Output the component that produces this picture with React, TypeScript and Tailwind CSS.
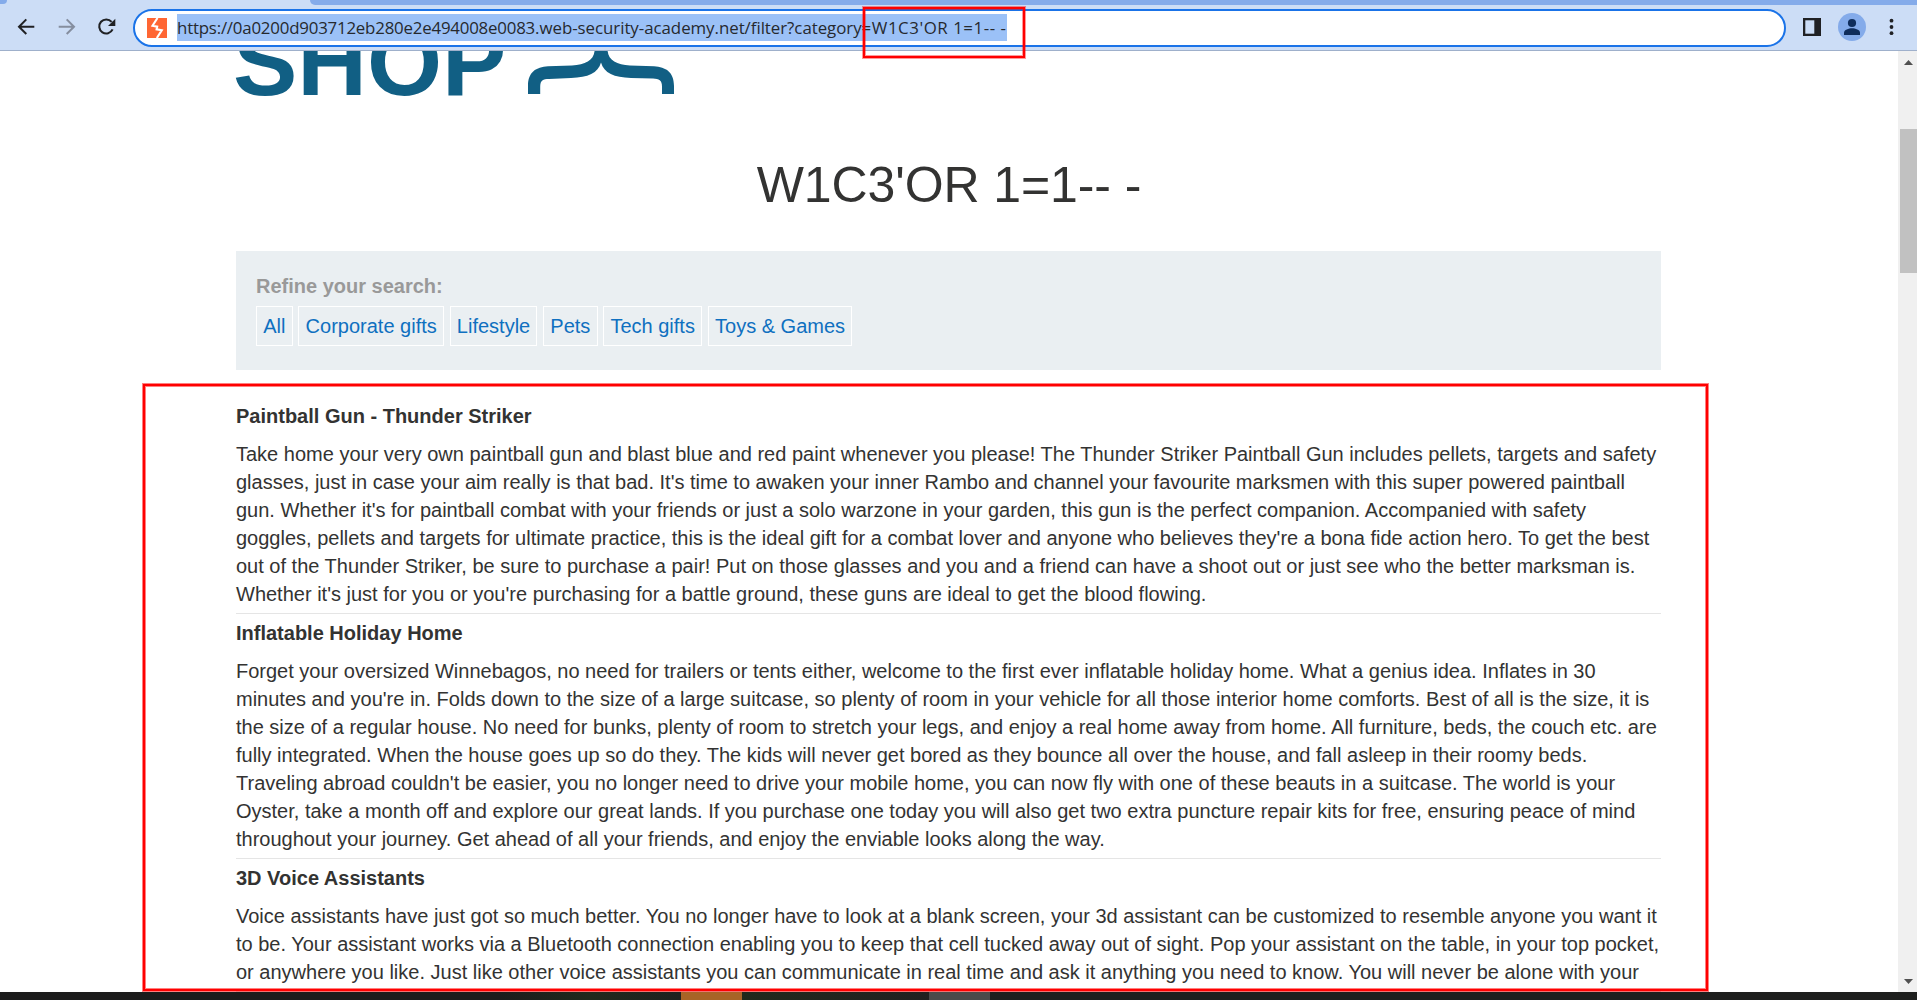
import React from "react";

const categories = ["All", "Corporate gifts", "Lifestyle", "Pets", "Tech gifts", "Toys & Games"];

const products = [
  {
    name: "Paintball Gun - Thunder Striker",
    lines: [
      "Take home your very own paintball gun and blast blue and red paint whenever you please! The Thunder Striker Paintball Gun includes pellets, targets and safety",
      "glasses, just in case your aim really is that bad. It's time to awaken your inner Rambo and channel your favourite marksmen with this super powered paintball",
      "gun. Whether it's for paintball combat with your friends or just a solo warzone in your garden, this gun is the perfect companion. Accompanied with safety",
      "goggles, pellets and targets for ultimate practice, this is the ideal gift for a combat lover and anyone who believes they're a bona fide action hero. To get the best",
      "out of the Thunder Striker, be sure to purchase a pair! Put on those glasses and you and a friend can have a shoot out or just see who the better marksman is.",
      "Whether it's just for you or you're purchasing for a battle ground, these guns are ideal to get the blood flowing.",
    ],
  },
  {
    name: "Inflatable Holiday Home",
    lines: [
      "Forget your oversized Winnebagos, no need for trailers or tents either, welcome to the first ever inflatable holiday home. What a genius idea. Inflates in 30",
      "minutes and you're in. Folds down to the size of a large suitcase, so plenty of room in your vehicle for all those interior home comforts. Best of all is the size, it is",
      "the size of a regular house. No need for bunks, plenty of room to stretch your legs, and enjoy a real home away from home. All furniture, beds, the couch etc. are",
      "fully integrated. When the house goes up so do they. The kids will never get bored as they bounce all over the house, and fall asleep in their roomy beds.",
      "Traveling abroad couldn't be easier, you no longer need to drive your mobile home, you can now fly with one of these beauts in a suitcase. The world is your",
      "Oyster, take a month off and explore our great lands. If you purchase one today you will also get two extra puncture repair kits for free, ensuring peace of mind",
      "throughout your journey. Get ahead of all your friends, and enjoy the enviable looks along the way.",
    ],
  },
  {
    name: "3D Voice Assistants",
    lines: [
      "Voice assistants have just got so much better. You no longer have to look at a blank screen, your 3d assistant can be customized to resemble anyone you want it",
      "to be. Your assistant works via a Bluetooth connection enabling you to keep that cell tucked away out of sight. Pop your assistant on the table, in your top pocket,",
      "or anywhere you like. Just like other voice assistants you can communicate in real time and ask it anything you need to know. You will never be alone with your",
    ],
  },
];

function BrowserBar() {
  return (
    <header className="flex h-[51px] shrink-0 flex-col border-b border-[#9fb0cb] bg-[#ccddf6]">
      <div className="flex h-[5px] shrink-0 justify-between">
        <div className="h-[4px] w-[7px] rounded-br-[7px] bg-[#84abea]" />
        <div className="h-[5px] w-[1607px] rounded-bl-[8px] bg-[#84abea]" />
      </div>
      <div className="flex h-[45px] items-start pt-[4px]">
        <svg className="mt-[9px] ml-[17px] h-[18px] w-[18px]" viewBox="0 0 18 18" fill="none" stroke="#202124" strokeWidth="2">
          <path d="M17.3 8.7H2.2M9.3 1.4 2 8.7 9.3 16" />
        </svg>
        <svg className="mt-[9px] ml-[23px] h-[18px] w-[18px]" viewBox="0 0 18 18" fill="none" stroke="#858e9f" strokeWidth="2">
          <path d="M.7 8.7h15.1M8.7 1.4 16 8.7 8.7 16" />
        </svg>
        <svg className="mt-[9px] ml-[21px] h-[18px] w-[20px]" viewBox="0 0 20 18" fill="none">
          <path d="M14.6 3.9A7 7 0 1 0 15.6 11.4" stroke="#202124" strokeWidth="2.1" />
          <path d="M18.3.8V8H11z" fill="#202124" />
        </svg>
        <div className="ml-[16px] flex h-[38px] w-[1652.5px] items-start rounded-full border-[2px] border-[#1a73e8] bg-white">
          <svg className="mt-[7px] ml-[12px] h-5 w-5 shrink-0" viewBox="0 0 20 20">
            <path d="M0 0H20V20H0z" fill="#ff6633" />
            <path d="M10.500 0 5.500 7.800 10.200 8.600 9.600 11.300 14.800 12.300 9.800 20" fill="none" stroke="#fff" strokeWidth="2.1" />
          </svg>
          <div className="mt-[3px] ml-[10px] h-[27px] w-[830px] bg-[#9bc1f7] font-['Open_Sans','Noto_Sans',sans-serif] text-[16.85px] leading-[27px] whitespace-nowrap text-[#26292e]">
            <span className="tracking-[-0.2px]">https://0a0200d903712eb280e2e494008e0083</span>
            <span className="tracking-[-0.03px]">.web-security-academy.net/filter?category</span>
            <span className="tracking-[0.55px]">=W1C3'OR 1=1-- -</span>
          </div>
        </div>
        <svg className="mt-[9px] ml-[17px] h-[18px] w-[18px]" viewBox="0 0 18 18">
          <path d="M0 0h18v18H0z" fill="#202124" />
          <path d="M2.3 2.3h9v13.4h-9z" fill="#ccddf6" />
        </svg>
        <svg className="mt-[4px] ml-[17.5px] h-7 w-7" viewBox="0 0 28 28">
          <circle cx="14" cy="14" r="14" fill="#84abea" />
          <circle cx="14" cy="10" r="4.1" fill="#0f2d5c" />
          <path d="M6 22v-2.3c0-3 4.6-4.5 8-4.5s8 1.5 8 4.5V22z" fill="#0f2d5c" />
        </svg>
        <svg className="mt-[9px] ml-[23px] h-[18px] w-[5px]" viewBox="0 0 5 18" fill="#202124">
          <circle cx="2.5" cy="2.7" r="1.9" />
          <circle cx="2.5" cy="9" r="1.9" />
          <circle cx="2.5" cy="15.2" r="1.9" />
        </svg>
      </div>
    </header>
  );
}

function Logo() {
  return (
    <div className="-ml-[3px] flex h-[50px] items-start overflow-hidden">
      <div className="-mt-[38.5px] w-[295px] text-[96.5px] leading-[97px] font-bold text-[#115f84]">SHOP</div>
      <svg className="h-[43px] w-[147px] shrink-0" viewBox="0 0 147 43" fill="#115f84">
        <path d="M0 43V35C0 21 8 16 20 15.200L44 14.500C58 13.500 66.700 9 66.700-2H79.500C79.500 9 88 13.500 102 14.500L126 15.200C138 16 146 21 146 35V43H134V36C134 29 131 27.800 125 27.600L103 27C86 26.500 76 22 73 11.500C70 22 60 26.500 43 27L21 28C15 28.200 12.200 29 12.200 36V43z" />
      </svg>
    </div>
  );
}

function Scrollbar() {
  return (
    <div className="flex w-[19px] shrink-0 flex-col items-end bg-[#f0f0f0]">
      <div className="flex h-[78px] w-[17px] justify-center pt-[9px]">
        <svg className="h-[5px] w-[9px]" viewBox="0 0 9 5" fill="#505050"><path d="M4.5 0 9 5H0z" /></svg>
      </div>
      <div className="h-[144px] w-[17px] bg-[#c1c1c1]" />
      <div className="flex w-[17px] grow items-end justify-center pb-[8px]">
        <svg className="h-[5px] w-[9px]" viewBox="0 0 9 5" fill="#505050"><path d="M0 0H9L4.5 5z" /></svg>
      </div>
    </div>
  );
}

export default function App() {
  return (
    <div className="relative flex h-[1000px] w-[1917px] flex-col overflow-hidden bg-white font-['Liberation_Sans',Arial,sans-serif]">
      <BrowserBar />
      <div className="flex h-[941px] shrink-0 overflow-hidden">
        <main className="flex grow flex-col pl-[236px] text-[20px] leading-[28px] text-[#333332]">
          <div className="w-[1425px]">
            <Logo />
            <h1 className="mt-[54px] h-[60px] pl-[1px] text-center text-[50px] leading-[60px] tracking-[-0.1px]">W1C3'OR 1=1-- -</h1>
            <section className="mt-[36px] h-[119px] bg-[#eaeff2] px-[20px] pt-[20px]">
              <div className="h-[35px] leading-[30px] font-bold text-[#999999]">Refine your search:</div>
              <div className="flex gap-[5.6px]">
                {categories.map((c) => (
                  <a key={c} className="h-[40px] border border-white px-[6.25px] leading-[38px] whitespace-nowrap text-[#0f70c0]">{c}</a>
                ))}
              </div>
            </section>
            <section className="mt-[32px]">
              {products.map((p) => (
                <article key={p.name} className="mb-[5px] border-b border-[#e5e5e5] pb-[5px]">
                  <h3 className="mb-[10px] font-bold">{p.name}</h3>
                  {p.lines.map((l) => (
                    <p key={l} className="whitespace-nowrap">{l}</p>
                  ))}
                </article>
              ))}
            </section>
          </div>
        </main>
        <Scrollbar />
      </div>
      <footer className="flex h-[8px] shrink-0 bg-[#1e1f1e]">
        <div className="w-[500px] bg-[#1c1c1c]" />
        <div className="w-[181px] bg-gradient-to-r from-[#1c1c1c] via-[#20291c] to-[#1f211f]" />
        <div className="w-[61px] bg-[#a86426]" />
        <div className="w-[187px] bg-gradient-to-r from-[#20291c] to-[#202020]" />
        <div className="w-[61px] bg-[#4a4a4a]" />
      </footer>
      <div className="absolute top-[7px] left-[863px] h-[51px] w-[162px] border-2 border-[#ff0000] shadow-[0_0_0_1px_rgba(255,0,0,0.4),inset_0_0_0_1px_rgba(255,0,0,0.4)]" />
      <div className="absolute top-[384px] left-[143px] h-[607px] w-[1565px] border-2 border-[#ff0000] shadow-[0_0_0_1px_rgba(255,0,0,0.5),inset_0_0_0_1px_rgba(255,0,0,0.5)]" />
    </div>
  );
}
